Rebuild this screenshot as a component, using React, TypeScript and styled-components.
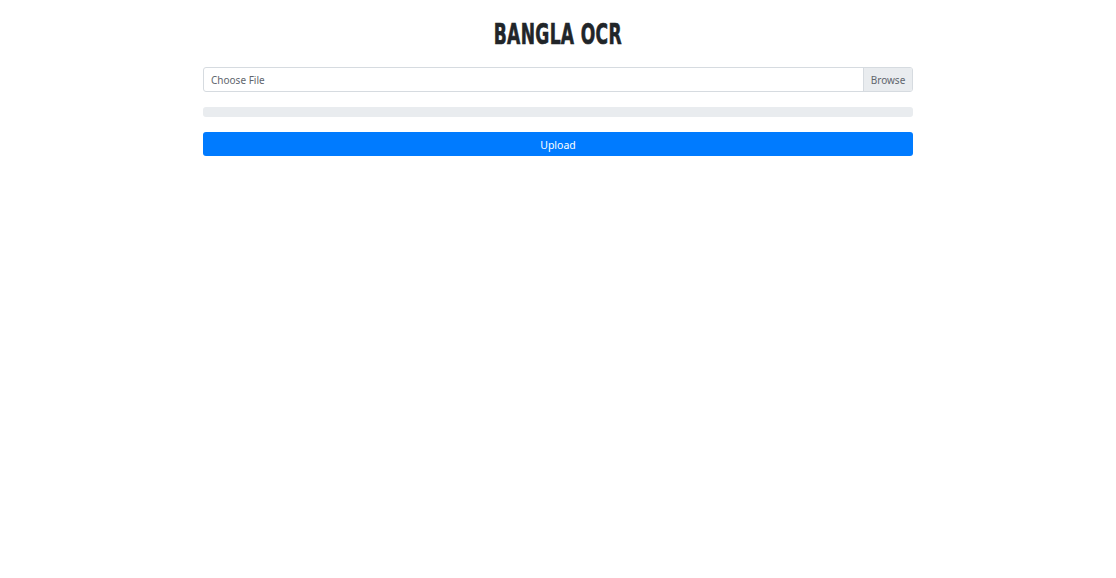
import React from "react";
import styled, { createGlobalStyle } from "styled-components";

const Global = createGlobalStyle`
  html, body { margin: 0; padding: 0; background: #fff; }
  body { font-family: "Noto Sans", "Open Sans", sans-serif; color: #212529; }
`;

const Container = styled.div`
  width: 710px;
  margin: 0 auto;
  display: flex;
  flex-direction: column;
  align-items: stretch;
  padding-top: 18px;
`;

const TitleRow = styled.div`
  display: flex;
  justify-content: center;
  height: 49px;
`;

const Title = styled.h1`
  margin: 0;
  font-family: "DejaVu Sans Condensed", "Liberation Sans Narrow", sans-serif;
  font-weight: 700;
  font-size: 29px;
  line-height: 32px;
  color: #212529;
  display: inline-block;
  transform: scaleX(0.655);
  letter-spacing: 0.5px;
  -webkit-text-stroke: 0.6px #212529;
`;

const FileRow = styled.label`
  display: flex;
  height: 25px;
  border: 1px solid #d6dbe0;
  border-radius: 3px;
  box-sizing: border-box;
  overflow: hidden;
  font-size: 10px;
  color: #5f666d;
  cursor: pointer;
`;

const FileName = styled.span`
  flex: 1;
  display: flex;
  align-items: center;
  padding-left: 7px;
`;

const Browse = styled.span`
  display: flex;
  align-items: center;
  justify-content: center;
  width: 48px;
  background: #e9ecef;
  border-left: 1px solid #d6dbe0;
`;

const Progress = styled.div`
  margin-top: 15px;
  height: 10px;
  background: #e9ecef;
  border-radius: 3px;
`;

const Button = styled.button`
  margin-top: 15px;
  height: 24px;
  padding-top: 2px;
  border: none;
  border-radius: 3px;
  background: #007bff;
  color: #fff;
  font-family: inherit;
  font-size: 10.5px;
  cursor: pointer;
`;

export default function App() {
  return (
    <>
      <Global />
      <Container>
        <TitleRow>
          <Title>BANGLA OCR</Title>
        </TitleRow>
        <FileRow>
          <FileName>Choose File</FileName>
          <Browse>Browse</Browse>
        </FileRow>
        <Progress />
        <Button>Upload</Button>
      </Container>
    </>
  );
}
